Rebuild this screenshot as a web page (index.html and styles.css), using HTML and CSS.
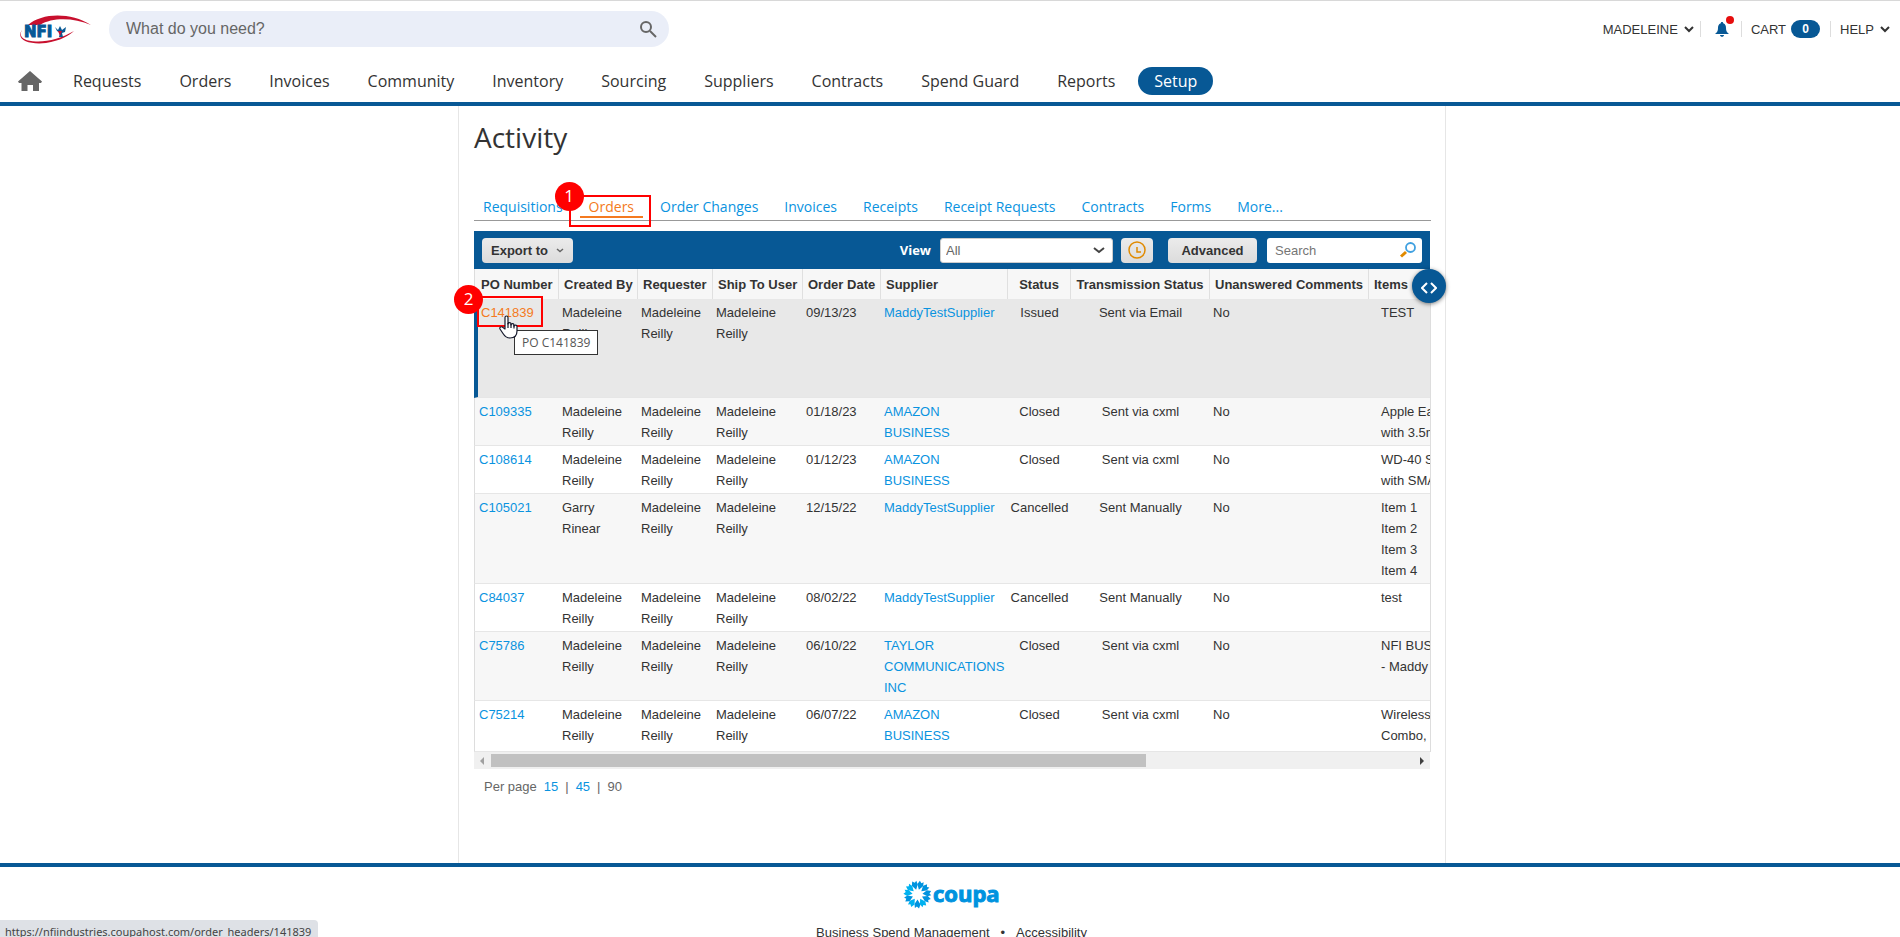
FILE: index.html
```html
<!DOCTYPE html>
<html lang="en">
<head>
    <meta charset="UTF-8">
    <meta name="viewport" content="width=device-width, initial-scale=1.0">
    <title>Activity - Coupa</title>
    <link rel="stylesheet" href="styles.css">
</head>
<body>
    <header class="header">
        <div class="topbar">
            <a class="logo" href="#" aria-label="NFI">
                <svg width="74" height="30" viewBox="0 0 74 30">
                    <path d="M10 11C24 -1 52 -2 73 11C56 4 35 3 22 11Z" fill="#c8102e"/>
                    <path d="M4 16C-3 26 12 31 28 29C42 27 52 21 56 17C44 24 30 28 18 27.500C6 27 0 23 4 16Z" fill="#c8102e"/>
                    <text x="6" y="23" class="logo-text">NFI</text>
                    <path d="M37 13l3 3 2-4 2 4 4-3-1 5-3 1 1 4h-4l1-4-3-2z" fill="#075895"/>
                    <path d="M40 17h4l-2 5z" fill="#c8102e"/>
                </svg>
            </a>
            <form class="search">
                <input type="text" placeholder="What do you need?" aria-label="What do you need?">
                <button type="button" aria-label="Search">
                    <svg width="18" height="18" viewBox="0 0 18 18" fill="none" stroke="#666" stroke-width="2">
                        <circle cx="7" cy="7" r="5"/>
                        <path d="M11 11l6 6"/>
                    </svg>
                </button>
            </form>
            <div class="user-menu">
                <a class="menu-item" href="#">MADELEINE
                    <svg width="10" height="7" viewBox="0 0 10 7" fill="none" stroke="#333" stroke-width="2"><path d="M1 1l4 4 4-4"/></svg>
                </a>
                <a class="menu-item bell" href="#" aria-label="Notifications">
                    <svg width="14" height="15" viewBox="0 0 14 15" fill="#075895"><path d="M7 0c.8 0 1.200.5 1.200 1.200C10.500 2 11 4 11 6c0 3 .8 4.500 3 6H0c2.200-1.500 3-3 3-6 0-2 .5-4 2.800-4.800C5.800.5 6.200 0 7 0zM5 13h4c0 2.400-4 2.400-4 0z"/></svg>
                    <span class="bell-dot"></span>
                </a>
                <a class="menu-item" href="#">CART <span class="cart-count">0</span></a>
                <a class="menu-item" href="#">HELP
                    <svg width="10" height="7" viewBox="0 0 10 7" fill="none" stroke="#333" stroke-width="2"><path d="M1 1l4 4 4-4"/></svg>
                </a>
            </div>
        </div>
        <nav class="nav">
            <a class="home" href="#" aria-label="Home">
                <svg width="24" height="20" viewBox="0 0 24 20" fill="#666"><path d="M12 0l12 10.500-1 1.500h-2v8h-6v-6H9.500v6H3.500v-8H1L0 10.500z"/></svg>
            </a>
            <a href="#">Requests</a>
            <a href="#">Orders</a>
            <a href="#">Invoices</a>
            <a href="#">Community</a>
            <a href="#">Inventory</a>
            <a href="#">Sourcing</a>
            <a href="#">Suppliers</a>
            <a href="#">Contracts</a>
            <a href="#">Spend Guard</a>
            <a href="#">Reports</a>
            <a class="active" href="#">Setup</a>
        </nav>
    </header>

    <div class="page">
        <main class="content">
            <h1>Activity</h1>

            <ul class="tabs">
                <li><a href="#">Requisitions</a></li>
                <li class="current">
                    <a href="#">Orders</a>
                    <span class="callout callout-tab"><b>1</b></span>
                </li>
                <li><a href="#">Order Changes</a></li>
                <li><a href="#">Invoices</a></li>
                <li><a href="#">Receipts</a></li>
                <li><a href="#">Receipt Requests</a></li>
                <li><a href="#">Contracts</a></li>
                <li><a href="#">Forms</a></li>
                <li><a href="#">More...</a></li>
            </ul>

            <div class="toolbar">
                <button class="btn export" type="button">Export to
                    <svg width="8" height="5" viewBox="0 0 8 5" fill="none" stroke="#666" stroke-width="1.500"><path d="M1 1l3 2.500L7 1"/></svg>
                </button>
                <label for="view">View</label>
                <div class="select">
                    <select id="view"><option>All</option></select>
                    <svg width="12" height="7" viewBox="0 0 12 7" fill="none" stroke="#444" stroke-width="2"><path d="M1 1l5 4 5-4"/></svg>
                </div>
                <button class="btn clock" type="button" aria-label="Scheduled exports">
                    <svg width="18" height="18" viewBox="0 0 18 18" fill="none" stroke="#e08a00"><circle cx="9" cy="9" r="8" stroke-width="1.500"/><path d="M9 6v5h4" stroke-width="1.500"/></svg>
                </button>
                <button class="btn advanced" type="button">Advanced</button>
                <div class="table-search">
                    <input type="text" placeholder="Search" aria-label="Search orders">
                    <svg width="16" height="16" viewBox="0 0 16 16" fill="none"><circle cx="10.500" cy="5.500" r="4.500" stroke="#3fa0e0" stroke-width="1.800"/><path d="M6 10l-5 4.500" stroke="#e08a00" stroke-width="3"/></svg>
                </div>
            </div>

            <div class="grid">
                <div class="grid-scroll">
                    <table>
                        <colgroup>
                            <col class="c-po"><col class="c-created"><col class="c-requester"><col class="c-ship"><col class="c-date">
                            <col class="c-supplier"><col class="c-status"><col class="c-trans"><col class="c-comments"><col class="c-items">
                        </colgroup>
                        <thead>
                            <tr>
                                <th>PO Number</th>
                                <th>Created By</th>
                                <th>Requester</th>
                                <th>Ship To User</th>
                                <th>Order Date</th>
                                <th>Supplier</th>
                                <th class="center">Status</th>
                                <th class="center">Transmission Status</th>
                                <th>Unanswered Comments</th>
                                <th>Items</th>
                            </tr>
                        </thead>
                        <tbody>
                            <tr class="hovered">
                                <td><a href="#">C141839</a></td>
                                <td>Madeleine Reilly</td>
                                <td>Madeleine Reilly</td>
                                <td>Madeleine Reilly</td>
                                <td>09/13/23</td>
                                <td><a href="#">MaddyTestSupplier</a></td>
                                <td class="center">Issued</td>
                                <td class="center">Sent via Email</td>
                                <td>No</td>
                                <td class="items">TEST</td>
                            </tr>
                            <tr class="odd">
                                <td><a href="#">C109335</a></td>
                                <td>Madeleine Reilly</td>
                                <td>Madeleine Reilly</td>
                                <td>Madeleine Reilly</td>
                                <td>01/18/23</td>
                                <td><a href="#">AMAZON BUSINESS</a></td>
                                <td class="center">Closed</td>
                                <td class="center">Sent via cxml</td>
                                <td>No</td>
                                <td class="items">Apple EarPods<br>with 3.5mm Plug</td>
                            </tr>
                            <tr>
                                <td><a href="#">C108614</a></td>
                                <td>Madeleine Reilly</td>
                                <td>Madeleine Reilly</td>
                                <td>Madeleine Reilly</td>
                                <td>01/12/23</td>
                                <td><a href="#">AMAZON BUSINESS</a></td>
                                <td class="center">Closed</td>
                                <td class="center">Sent via cxml</td>
                                <td>No</td>
                                <td class="items">WD-40 Spray<br>with SMART Straw</td>
                            </tr>
                            <tr class="odd">
                                <td><a href="#">C105021</a></td>
                                <td>Garry Rinear</td>
                                <td>Madeleine Reilly</td>
                                <td>Madeleine Reilly</td>
                                <td>12/15/22</td>
                                <td><a href="#">MaddyTestSupplier</a></td>
                                <td class="center">Cancelled</td>
                                <td class="center">Sent Manually</td>
                                <td>No</td>
                                <td class="items">Item 1<br>Item 2<br>Item 3<br>Item 4</td>
                            </tr>
                            <tr>
                                <td><a href="#">C84037</a></td>
                                <td>Madeleine Reilly</td>
                                <td>Madeleine Reilly</td>
                                <td>Madeleine Reilly</td>
                                <td>08/02/22</td>
                                <td><a href="#">MaddyTestSupplier</a></td>
                                <td class="center">Cancelled</td>
                                <td class="center">Sent Manually</td>
                                <td>No</td>
                                <td class="items">test</td>
                            </tr>
                            <tr class="odd">
                                <td><a href="#">C75786</a></td>
                                <td>Madeleine Reilly</td>
                                <td>Madeleine Reilly</td>
                                <td>Madeleine Reilly</td>
                                <td>06/10/22</td>
                                <td><a href="#">TAYLOR COMMUNICATIONS INC</a></td>
                                <td class="center">Closed</td>
                                <td class="center">Sent via cxml</td>
                                <td>No</td>
                                <td class="items">NFI BUSINESS CARDS<br>- Maddy</td>
                            </tr>
                            <tr>
                                <td><a href="#">C75214</a></td>
                                <td>Madeleine Reilly</td>
                                <td>Madeleine Reilly</td>
                                <td>Madeleine Reilly</td>
                                <td>06/07/22</td>
                                <td><a href="#">AMAZON BUSINESS</a></td>
                                <td class="center">Closed</td>
                                <td class="center">Sent via cxml</td>
                                <td>No</td>
                                <td class="items">Wireless<br>Combo,</td>
                            </tr>
                        </tbody>
                    </table>
                </div>
                <div class="scrollbar">
                    <svg width="4" height="8" viewBox="0 0 4 8" fill="#a0a0a0"><path d="M4 0v8L0 4z"/></svg>
                    <div class="track"><div class="thumb"></div></div>
                    <svg width="4" height="8" viewBox="0 0 4 8" fill="#404040"><path d="M0 0v8l4-4z"/></svg>
                </div>

                <button class="expand" type="button" aria-label="Expand table">
                    <svg width="16" height="12" viewBox="0 0 16 12" fill="none" stroke="#fff" stroke-width="2"><path d="M6 1L1 6l5 5M10 1l5 5-5 5"/></svg>
                </button>
                <span class="callout callout-po"><b>2</b></span>
                <div class="tooltip" role="tooltip">PO C141839</div>
                <svg class="cursor" width="19" height="24" viewBox="0 0 19 24" fill="#fff" stroke="#14182b" stroke-width="1.200" stroke-linejoin="round">
                    <path d="M6 14V2.500C6 .5 9 .5 9 2.500V9c0-1.800 3-1.800 3 0v1c0-1.800 3-1.800 3 .2v1c0-1.700 3-1.500 3 .3V16c0 5-2.500 7-7 7-4 0-5.500-2-7-4.500L1 14c-.8-2 1.500-3 3-1.500z"/>
                    <path d="M9 8v5M12 9v4M15 10v3.500"/>
                </svg>
            </div>

            <div class="per-page">
                <span>Per page</span>
                <a href="#">15</a><span>|</span><a href="#">45</a><span>|</span><span>90</span>
            </div>
        </main>
    </div>

    <footer class="footer">
        <svg class="coupa" width="98" height="30" viewBox="0 0 98 30">
            <defs>
                <path id="petal" d="M0 -5L3 -9.500 2.600 -13.500 .6 -12 -1.500 -14 -3 -10z"/>
            </defs>
            <g transform="translate(14.500 14.500)" fill="#0093df">
                <use href="#petal" transform="rotate(16)"/>
                <use href="#petal" transform="rotate(49)"/>
                <use href="#petal" transform="rotate(82)"/>
                <use href="#petal" transform="rotate(115)"/>
                <use href="#petal" transform="rotate(148)" fill="#00b2f0"/>
                <use href="#petal" transform="rotate(180)"/>
                <use href="#petal" transform="rotate(213)" fill="#00b2f0"/>
                <use href="#petal" transform="rotate(246)"/>
                <use href="#petal" transform="rotate(279)" fill="#00b2f0"/>
                <use href="#petal" transform="rotate(311)" fill="#00b2f0"/>
                <use href="#petal" transform="rotate(344)"/>
            </g>
            <text x="30" y="22" class="coupa-text">coupa</text>
        </svg>
        <div class="footer-links">
            <a href="#">Business Spend Management</a><span>•</span><a href="#">Accessibility</a>
        </div>
    </footer>

    <div class="status-bar">https://nfiindustries.coupahost.com/order_headers/141839</div>
</body>
</html>
```
FILE: styles.css
```css
* {
    box-sizing: border-box;
}
body {
    margin: 0;
    height: 100vh;
    overflow: hidden;
    border-top: 1px solid #d8d8d8;
    background: #fff;
    color: #333;
    font-family: "Liberation Sans", Arial, sans-serif;
    font-size: 13px;
    line-height: 21px;
}
a {
    color: #0a93df;
    text-decoration: none;
}
svg {
    display: block;
    flex: none;
}

/* header */
.header {
    border-bottom: 4px solid #075895;
}
.topbar {
    display: flex;
    align-items: center;
    padding: 10px 10px 0 18px;
}
.logo {
    margin-right: 17px;
}
.logo-text {
    font: bold 15px "DejaVu Sans", sans-serif;
    fill: #075895;
    stroke: #075895;
}
.search {
    display: flex;
    align-items: center;
    width: 560px;
    height: 36px;
    padding: 0 12px 0 17px;
    border-radius: 18px;
    background: #eaeef8;
}
.search input {
    flex: 1;
    border: 0;
    padding: 0;
    background: none;
    font: 16px "Liberation Sans", Arial, sans-serif;
}
.search input::placeholder {
    color: #666;
}
.search button {
    border: 0;
    padding: 0;
    background: none;
}
.user-menu {
    display: flex;
    align-items: center;
    margin-left: auto;
}
.menu-item {
    position: relative;
    display: flex;
    align-items: center;
    gap: 6px;
    height: 16px;
    padding: 0 6px 0 9px;
    border-left: 1px solid #ddd;
    color: #333;
}
.menu-item:first-child {
    border-left: 0;
}
.menu-item:last-child {
    padding-right: 0;
}
.bell {
    padding: 0 12px 0 14px;
}
.bell-dot {
    position: absolute;
    top: -5px;
    right: 7px;
    width: 8px;
    height: 8px;
    border-radius: 50%;
    background: #e60d0d;
}
.cart-count {
    width: 29px;
    border-radius: 9px;
    margin: 0 4px 0 -1px;
    background: #075895;
    color: #fff;
    font-size: 12px;
    font-weight: bold;
    line-height: 18px;
    text-align: center;
}
.nav {
    display: flex;
    align-items: center;
    gap: 38px;
    padding: 20px 18px 7px;
}
.nav a {
    color: #333;
    font: 16px/28px "Open Sans", sans-serif;
}
.nav .home {
    margin-right: -7px;
}
.nav .active {
    margin-left: -15px;
    padding: 0 16px;
    border-radius: 14px;
    background: #075895;
    color: #fff;
}

/* page */
.page {
    padding-left: 4px;
}
.content {
    max-width: 988px;
    margin: 0 auto;
    padding: 12px 14px 59px 15px;
    border: solid #e6e6e6;
    border-width: 0 1px;
}
h1 {
    margin: 0 0 41px;
    font: 28px/38px "Open Sans", sans-serif;
}
.tabs {
    display: flex;
    gap: 8px;
    margin: 0 0 10px;
    padding: 0 0 2px;
    border-bottom: 1px solid #999;
    list-style: none;
}
.tabs li {
    position: relative;
}
.tabs a {
    display: block;
    padding: 0 9px;
    border-bottom: 2px solid transparent;
    font: 14px/19px "Open Sans", sans-serif;
}
.tabs .current a {
    border-color: #f47a20;
    color: #f47a20;
}
.toolbar {
    display: flex;
    align-items: center;
    height: 38px;
    margin-right: 1px;
    padding: 0 8px;
    background: #075895;
}
.btn {
    display: flex;
    align-items: center;
    justify-content: center;
    height: 25px;
    padding: 0 9px;
    border: 0;
    border-radius: 4px;
    background: linear-gradient(#ebebeb, #dcdcdc);
    color: #333;
    font: bold 13px "Liberation Sans", Arial, sans-serif;
}
.export {
    gap: 8px;
    margin-right: auto;
}
.toolbar label {
    margin-right: 9px;
    color: #fff;
    font: bold 13px "Open Sans", sans-serif;
}
.select,
.table-search {
    position: relative;
}
.select svg {
    position: absolute;
    top: 9px;
    right: 8px;
}
.select select {
    display: block;
    width: 173px;
    height: 25px;
    padding: 0 5px;
    border: 1px solid #ccc;
    border-radius: 3px;
    background: #fff;
    color: #666;
    font: 13px "Liberation Sans", Arial, sans-serif;
    appearance: none;
}
.clock {
    width: 32px;
    margin: 0 15px 0 8px;
    padding: 0;
}
.advanced {
    width: 89px;
    margin-right: 10px;
}
.table-search input {
    display: block;
    width: 155px;
    height: 25px;
    padding: 0 8px;
    border: 0;
    border-radius: 3px;
    font: 13px "Liberation Sans", Arial, sans-serif;
}
.table-search svg {
    position: absolute;
    top: 4px;
    right: 6px;
}

/* orders table */
.grid {
    position: relative;
}
.grid-scroll {
    overflow: hidden;
    border-right: 1px solid #ddd;
}
table {
    width: 1120px;
    table-layout: fixed;
    border-collapse: separate;
    border-spacing: 0;
}
.c-po { width: 85px; }
.c-created { width: 79px; }
.c-requester { width: 75px; }
.c-ship { width: 90px; }
.c-date { width: 78px; }
.c-supplier { width: 127px; }
.c-status { width: 63px; }
.c-trans { width: 139px; }
.c-comments { width: 159px; }
th {
    height: 30px;
    padding: 0 0 0 5px;
    border-right: 1px solid #e0e0e0;
    background: #f7f7f7;
    text-align: left;
    white-space: nowrap;
}
td {
    padding: 3px 3px 2px;
    border-bottom: 1px solid #e6e6e6;
    vertical-align: top;
}
th:first-child {
    padding-left: 6px;
    border-left: 1px solid #ddd;
}
td:first-child {
    padding-left: 4px;
    border-left: 1px solid #ddd;
}
th.center,
td.center {
    padding-left: 0;
    padding-right: 0;
    text-align: center;
}
td.items {
    padding-left: 12px;
    white-space: nowrap;
}
.odd td {
    background: #f7f7f7;
}
.hovered td {
    height: 99px;
    background: #e8e8e8;
}
.hovered td:first-child {
    padding-left: 3px;
    border-left: 4px solid #075895;
}
.hovered td:first-child a {
    color: #f47a20;
}
tr:last-child td {
    padding-bottom: 5px;
}
.scrollbar {
    display: flex;
    align-items: center;
    gap: 7px;
    height: 17px;
    margin-right: 1px;
    padding: 0 6px;
    background: #f0f0f0;
}
.track {
    flex: 1;
}
.thumb {
    width: 71%;
    height: 13px;
    background: #c1c1c1;
}
.expand {
    position: absolute;
    top: 0;
    right: -15px;
    display: flex;
    align-items: center;
    justify-content: center;
    width: 34px;
    height: 34px;
    padding: 4px 0 0;
    border: 0;
    border-radius: 50%;
    background: #075895;
    box-shadow: 0 1px 4px rgba(0, 0, 0, 0.5);
}

/* step markers */
.callout {
    position: absolute;
    border: 2px solid #f00;
}
.callout b {
    position: absolute;
    width: 29px;
    height: 29px;
    border-radius: 50%;
    background: #f00;
    color: #fff;
    font: 17px/28px "Open Sans", sans-serif;
    text-align: center;
}
.callout-tab {
    top: -2px;
    left: -11px;
    width: 82px;
    height: 32px;
}
.callout-tab b {
    top: -15px;
    left: -16px;
}
.callout-po {
    top: 27px;
    left: 3px;
    width: 66px;
    height: 31px;
}
.callout-po b {
    top: -13px;
    left: -25px;
}
.tooltip {
    position: absolute;
    top: 61px;
    left: 40px;
    padding: 0 7px;
    border: 1px solid #333;
    background: #fff;
    color: #555;
    font: 12px/23px "Open Sans", sans-serif;
}
.cursor {
    position: absolute;
    top: 46px;
    left: 25px;
}

.per-page {
    display: flex;
    gap: 7px;
    padding: 7px 10px;
    color: #666;
}

/* footer */
.footer {
    display: flex;
    flex-direction: column;
    align-items: center;
    gap: 12px;
    padding: 13px 0 0 3px;
    border-top: 4px solid #075895;
}
.coupa-text {
    font: bold 22px "Open Sans", sans-serif;
    fill: #0093df;
    stroke: #0093df;
}
.footer-links {
    display: flex;
    gap: 11px;
}
.footer-links a {
    color: #333;
}
.status-bar {
    position: fixed;
    bottom: 0;
    left: 0;
    height: 17px;
    padding: 0 7px 0 5px;
    border-radius: 0 4px 0 0;
    background: #dee1e6;
    color: #444;
    font: 11px/23px "Noto Sans", sans-serif;
    overflow: hidden;
}
```
